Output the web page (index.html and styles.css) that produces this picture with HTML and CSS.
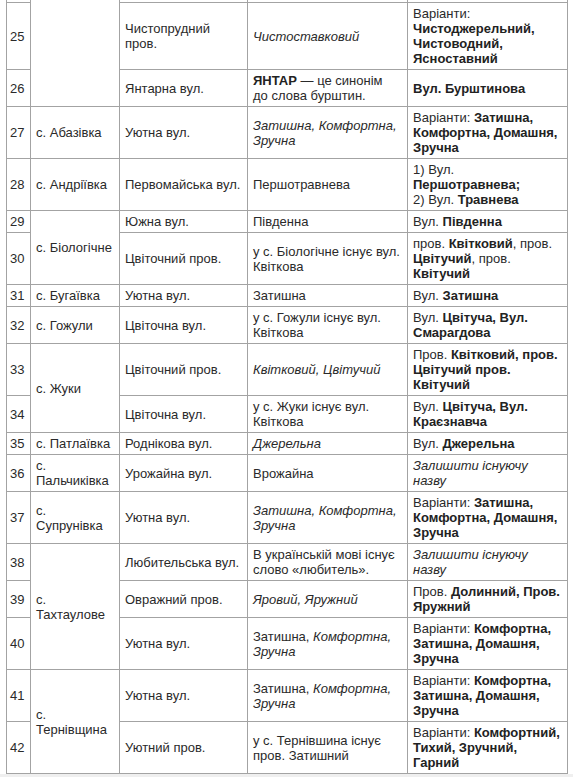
FILE: index.html
```html
<!DOCTYPE html>
<html lang="uk">
<head>
<meta charset="utf-8">
<title>Перейменування вулиць</title>
<link rel="stylesheet" href="styles.css">
</head>
<body>
<div class="page">
  <table class="streets">
    <colgroup>
      <col class="c-num">
      <col class="c-village">
      <col class="c-old">
      <col class="c-note">
      <col class="c-new">
    </colgroup>
    <tbody>
      <tr class="cut">
        <td></td>
        <td rowspan="3"></td>
        <td></td>
        <td></td>
        <td></td>
      </tr>
      <tr>
        <td class="num">25</td>
        <td>Чистопрудний<br>пров.</td>
        <td><i>Чистоставковий</i></td>
        <td>Варіанти:<br><b>Чистоджерельний,<br>Чистоводний,<br>Ясноставний</b></td>
      </tr>
      <tr>
        <td class="num">26</td>
        <td>Янтарна вул.</td>
        <td><b>ЯНТАР</b> — це синонім<br>до слова бурштин.</td>
        <td><b>Вул. Бурштинова</b></td>
      </tr>
      <tr>
        <td class="num">27</td>
        <td>с. Абазівка</td>
        <td>Уютна вул.</td>
        <td><i>Затишна, Комфортна,<br>Зручна</i></td>
        <td>Варіанти: <b>Затишна,<br>Комфортна, Домашня,<br>Зручна</b></td>
      </tr>
      <tr>
        <td class="num">28</td>
        <td>с. Андріївка</td>
        <td>Первомайська вул.</td>
        <td>Першотравнева</td>
        <td>1) Вул.<br><b>Першотравнева;</b><br>2) Вул. <b>Травнева</b></td>
      </tr>
      <tr>
        <td class="num">29</td>
        <td rowspan="2">с. Біологічне</td>
        <td>Южна вул.</td>
        <td>Південна</td>
        <td>Вул. <b>Південна</b></td>
      </tr>
      <tr>
        <td class="num">30</td>
        <td>Цвіточний пров.</td>
        <td>у с. Біологічне існує вул.<br>Квіткова</td>
        <td>пров. <b>Квітковий</b>, пров.<br><b>Цвітучий</b>, пров.<br><b>Квітучий</b></td>
      </tr>
      <tr>
        <td class="num">31</td>
        <td>с. Бугаївка</td>
        <td>Уютна вул.</td>
        <td>Затишна</td>
        <td>Вул. <b>Затишна</b></td>
      </tr>
      <tr>
        <td class="num">32</td>
        <td>с. Гожули</td>
        <td>Цвіточна вул.</td>
        <td>у с. Гожули існує вул.<br>Квіткова</td>
        <td>Вул. <b>Цвітуча, Вул.<br>Смарагдова</b></td>
      </tr>
      <tr>
        <td class="num">33</td>
        <td rowspan="2">с. Жуки</td>
        <td>Цвіточний пров.</td>
        <td><i>Квітковий, Цвітучий</i></td>
        <td>Пров. <b>Квітковий, пров.<br>Цвітучий пров.<br>Квітучий</b></td>
      </tr>
      <tr>
        <td class="num">34</td>
        <td>Цвіточна вул.</td>
        <td>у с. Жуки існує вул.<br>Квіткова</td>
        <td>Вул. <b>Цвітуча, Вул.<br>Краєзнавча</b></td>
      </tr>
      <tr>
        <td class="num">35</td>
        <td>с. Патлаївка</td>
        <td>Роднікова вул.</td>
        <td><i>Джерельна</i></td>
        <td>Вул. <b>Джерельна</b></td>
      </tr>
      <tr>
        <td class="num">36</td>
        <td>с.<br>Пальчиківка</td>
        <td>Урожайна вул.</td>
        <td>Врожайна</td>
        <td><i>Залишити існуючу<br>назву</i></td>
      </tr>
      <tr>
        <td class="num">37</td>
        <td>с.<br>Супрунівка</td>
        <td>Уютна вул.</td>
        <td><i>Затишна, Комфортна,<br>Зручна</i></td>
        <td>Варіанти: <b>Затишна,<br>Комфортна, Домашня,<br>Зручна</b></td>
      </tr>
      <tr>
        <td class="num">38</td>
        <td rowspan="3">с.<br>Тахтаулове</td>
        <td>Любительська вул.</td>
        <td>В українській мові існує<br>слово «любитель».</td>
        <td><i>Залишити існуючу<br>назву</i></td>
      </tr>
      <tr>
        <td class="num">39</td>
        <td>Овражний пров.</td>
        <td><i>Яровий, Яружний</i></td>
        <td>Пров. <b>Долинний, Пров.<br>Яружний</b></td>
      </tr>
      <tr>
        <td class="num">40</td>
        <td>Уютна вул.</td>
        <td>Затишна, <i>Комфортна,<br>Зручна</i></td>
        <td>Варіанти: <b>Комфортна,<br>Затишна, Домашня,<br>Зручна</b></td>
      </tr>
      <tr>
        <td class="num">41</td>
        <td rowspan="2">с.<br>Тернівщина</td>
        <td>Уютна вул.</td>
        <td>Затишна, <i>Комфортна,<br>Зручна</i></td>
        <td>Варіанти: <b>Комфортна,<br>Затишна, Домашня,<br>Зручна</b></td>
      </tr>
      <tr>
        <td class="num">42</td>
        <td>Уютний пров.</td>
        <td>у с. Тернівшина існує<br>пров. Затишний</td>
        <td>Варіанти: <b>Комфортний,<br>Тихий, Зручний,<br>Гарний</b></td>
      </tr>
    </tbody>
  </table>
  <div class="after"></div>
</div>
</body>
</html>
```

FILE: styles.css
```css
html, body {
  margin: 0;
  padding: 0;
  background: #ffffff;
}

.page {
  font-family: "Liberation Sans", Arial, sans-serif;
  font-size: 13px;
  line-height: 15px;
  color: #2a2a2a;
}

.streets {
  border-collapse: collapse;
  table-layout: fixed;
  width: 562px;
  margin: -1px 0 0 6px;
  background: #ffffff;
}

.c-num { width: 24px; }
.c-village { width: 89px; }
.c-old { width: 128px; }
.c-note { width: 160px; }
.c-new { width: 160px; }

.streets td {
  border: 1px solid #a3a3a3;
  padding: 3px 5px;
  vertical-align: middle;
  text-align: left;
}

.streets td.num {
  padding-left: 3px;
  padding-right: 2px;
}

.streets tr.cut td {
  height: 2px;
  padding: 0;
  font-size: 0;
  line-height: 0;
}

.streets b {
  font-weight: bold;
  color: #222222;
}

.after {
  height: 12px;
  background: #efefef;
}
```
